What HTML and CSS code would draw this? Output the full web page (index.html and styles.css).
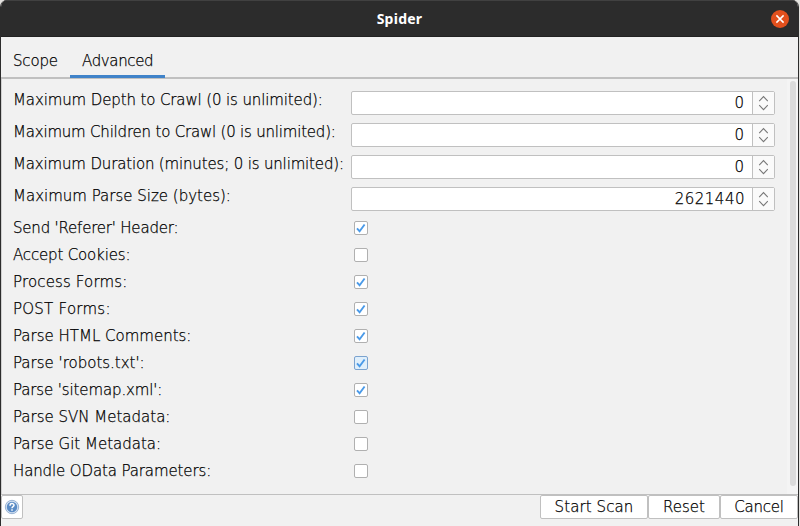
FILE: index.html
```html
<!DOCTYPE html>
<html lang="en">
<head>
<meta charset="utf-8">
<title>Spider</title>
<link rel="stylesheet" href="styles.css">
</head>
<body>
<svg class="defs" aria-hidden="true">
  <symbol id="arrows" viewBox="0 0 22 22"><path d="M6.5 9 11 4.3 15.5 9M6.5 13.3 11 18l4.5-4.7" fill="none" stroke="#777" stroke-width="1.1"/></symbol>
  <symbol id="tick" viewBox="0 0 12 12"><path d="M2 6.3 4.6 9.3 9.6 2.5" fill="none" stroke="#4a9ae8" stroke-width="1.9"/></symbol>
</svg>
<div class="window">
  <header class="titlebar">
    <h1>Spider</h1>
    <button class="close" aria-label="Close"><svg viewBox="0 0 18 18"><path d="m5.4 5.4 7.2 7.2m0-7.2-7.2 7.2" stroke="#fff" stroke-width="1.5"/></svg></button>
  </header>
  <nav class="tabs">
    <span class="tab scope">Scope</span>
    <span class="tab active">Advanced</span>
  </nav>
  <main class="panel">
    <div class="form">
      <div class="row number"><label class="tight">Maximum Depth to Crawl (0 is unlimited):</label><div class="spinner"><span class="value">0</span><svg><use href="#arrows"/></svg></div></div>
      <div class="row number"><label class="tighter">Maximum Children to Crawl (0 is unlimited):</label><div class="spinner"><span class="value">0</span><svg><use href="#arrows"/></svg></div></div>
      <div class="row number"><label class="snug">Maximum Duration (minutes; 0 is unlimited):</label><div class="spinner"><span class="value">0</span><svg><use href="#arrows"/></svg></div></div>
      <div class="row number"><label>Maximum Parse Size (bytes):</label><div class="spinner"><span class="value long">2621440</span><svg><use href="#arrows"/></svg></div></div>
      <div class="row"><label class="tighter">Send 'Referer' Header:</label><span class="check"><svg><use href="#tick"/></svg></span></div>
      <div class="row"><label class="snug">Accept Cookies:</label><span class="check"></span></div>
      <div class="row"><label class="loose">Process Forms:</label><span class="check"><svg><use href="#tick"/></svg></span></div>
      <div class="row"><label class="looser">POST Forms:</label><span class="check"><svg><use href="#tick"/></svg></span></div>
      <div class="row"><label>Parse HTML Comments:</label><span class="check"><svg><use href="#tick"/></svg></span></div>
      <div class="row"><label>Parse 'robots.txt':</label><span class="check hover"><svg><use href="#tick"/></svg></span></div>
      <div class="row"><label class="tight">Parse 'sitemap.xml':</label><span class="check"><svg><use href="#tick"/></svg></span></div>
      <div class="row"><label>Parse SVN Metadata:</label><span class="check"></span></div>
      <div class="row"><label>Parse Git Metadata:</label><span class="check"></span></div>
      <div class="row"><label class="tight">Handle OData Parameters:</label><span class="check"></span></div>
    </div>
    <div class="scrollbar"><div class="thumb"></div></div>
  </main>
  <footer class="actions">
    <button class="help" aria-label="Help"><svg viewBox="0 0 16 16"><circle cx="8" cy="8" r="6.7" fill="#d5e2f2" stroke="#85a4cb" stroke-width=".8"/><circle cx="8" cy="8" r="5.2" fill="#5b8cc6"/><path d="M6 6.7C6 3.9 10 4 10 6.3 10 7.8 8 7.6 8 9.2M8 10.3v1.5" fill="none" stroke="#fff" stroke-width="1.5"/></svg></button>
    <button class="start">Start Scan</button>
    <button class="reset">Reset</button>
    <button class="cancel">Cancel</button>
  </footer>
</div>
</body>
</html>
```
FILE: styles.css
```css
* { box-sizing: border-box; }
body {
  margin: 0;
  background: #e4e2df;
  color: #000;
  font: 200 15px/18px "DejaVu Sans", sans-serif;
  -webkit-text-stroke: 0.25px;
}
.defs { position: absolute; width: 0; height: 0; }
.window {
  width: 799px;
  height: 526px;
  display: flex;
  flex-direction: column;
  background: #f1f1f1;
  border: solid #2c2c2c;
  border-width: 0 1px;
  border-radius: 7px 7px 0 0;
  overflow: hidden;
}
.titlebar {
  height: 37px;
  flex: none;
  display: grid;
  grid-template-columns: 1fr auto 1fr;
  align-items: center;
  padding-right: 9px;
  padding-left: 9px;
  background: #2c2c2c;
  border-top: 1px solid #414141;
  border-bottom: 1px solid #222;
}
h1 {
  grid-column: 2;
  margin: 0;
  color: #fff;
  font: bold 14px/18px "Noto Sans", sans-serif;
  letter-spacing: 0.25px;
  -webkit-text-stroke: 0;
}
.close {
  justify-self: end;
  width: 18px;
  height: 18px;
  padding: 0;
  border: 0;
  border-radius: 50%;
  background: #e2501d;
}
.close svg { display: block; }
.tabs {
  display: flex;
  flex: none;
  height: 42px;
  border-bottom: 2px solid #c0c0c0;
}
.tab { height: 41px; padding: 15px 12px 0; }
.scope { width: 69px; letter-spacing: -0.15px; }
.active { width: 95px; border-bottom: 3px solid #4083c9; letter-spacing: -0.35px; }
.panel {
  display: flex;
  flex: none;
  height: 416px;
  border-bottom: 1px solid #c0c0c0;
  border-left: 1px solid #d0d0d0;
}
.form { width: 773px; padding: 12px 0 0 11px; }
.row {
  display: grid;
  grid-template-columns: 338px 424px;
  align-items: start;
  height: 27px;
}
.number { height: 32px; }
label { white-space: nowrap; }
.tight { letter-spacing: -0.12px; }
.snug { letter-spacing: -0.16px; }
.tighter { letter-spacing: -0.2px; }
.loose { letter-spacing: 0.15px; }
.looser { letter-spacing: 0.25px; }
.spinner {
  display: flex;
  height: 24px;
  background: #fff;
  border: 1px solid #c0c0c0;
  border-radius: 2px;
}
.value { flex: 1; padding: 2px 8px 0 0; text-align: right; }
.long { padding-right: 7px; letter-spacing: 0.5px; }
.spinner svg {
  width: 22px;
  height: 22px;
  background: #fafafa;
  border-left: 1px solid #c0c0c0;
}
.check {
  width: 14px;
  height: 14px;
  margin: 2px 0 0 3px;
  border: 1px solid #b0b0b0;
  border-radius: 2px;
  background: #fff;
}
.check svg { display: block; width: 12px; height: 12px; }
.hover { background: #e0effb; border-color: #7ba3cf; }
.scrollbar { flex: 1; margin-left: 12px; padding: 2px 3px 8px 3px; background: #f4f4f4; }
.thumb { width: 6px; height: 100%; border-radius: 3px; background: #dbdbdb; }
.actions { display: flex; height: 24px; }
.actions button {
  height: 24px;
  padding: 0;
  border: 1px solid #c0c0c0;
  border-radius: 2px;
  background: #fff;
  color: #000;
  font: inherit;
}
.actions .help { width: 22px; margin-right: auto; }
.help svg { display: block; width: 16px; height: 16px; margin: 0 auto; }
.actions .start { width: 108px; letter-spacing: 0.1px; }
.reset { width: 72px; }
.actions .cancel { width: 78px; letter-spacing: -0.2px; }
```
